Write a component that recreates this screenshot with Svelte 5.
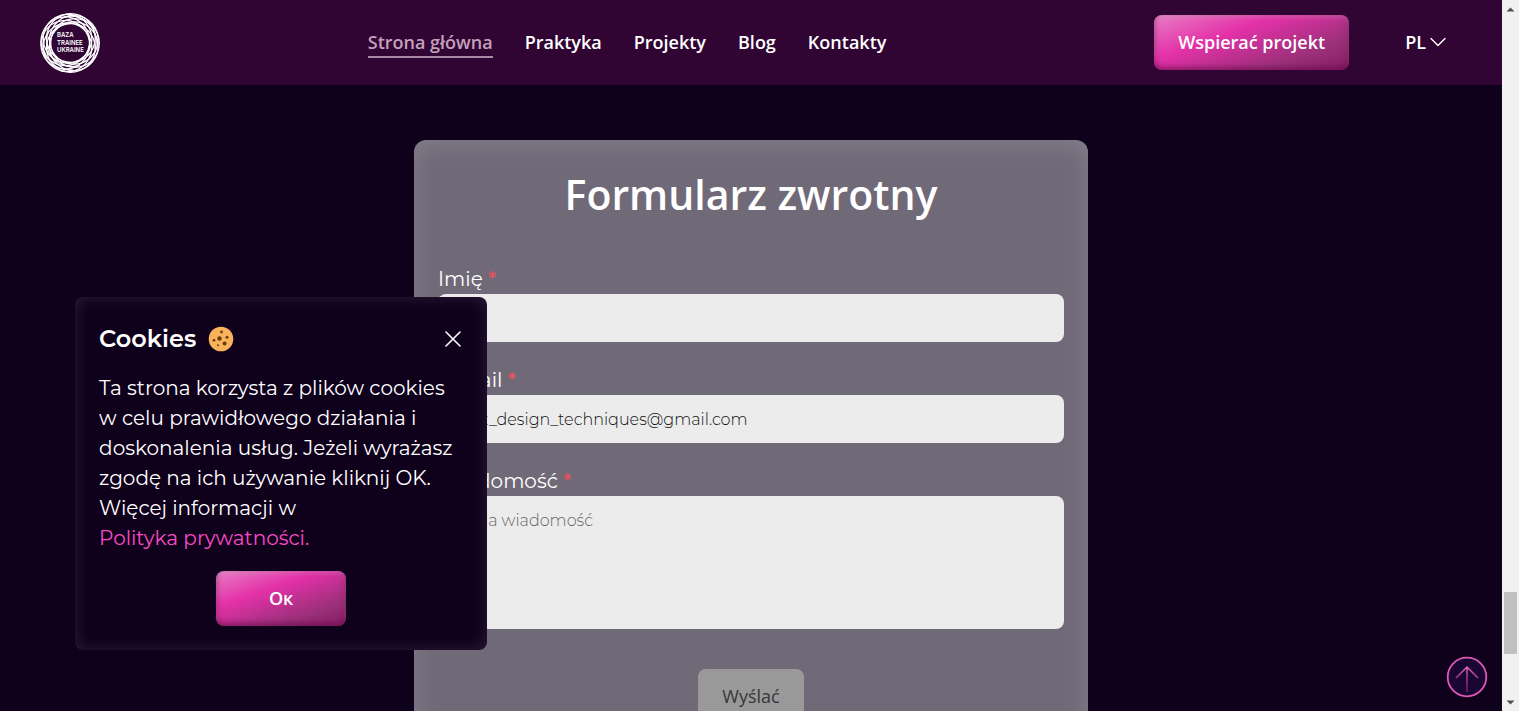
<script>
  const links = ['Strona główna', 'Praktyka', 'Projekty', 'Blog', 'Kontakty'];
  const rings = [0, 40, 80, 120, 160, 200, 240, 280, 320];
  let name = $state('');
  let email = $state('best_design_techniques@gmail.com');
  let message = $state('');
  let cookiesOpen = $state(true);
</script>

<div class="window">
  <div class="page">
    <header>
      <a class="logo" href="#home" aria-label="Baza Trainee Ukraine">
        <svg width="60" height="60" viewBox="0 0 60 60">
          <g fill="none" stroke="#fff" stroke-width="1.3">
            {#each rings as angle}
              <circle cx="35" cy="30" r="24.3" transform="rotate({angle} 30 30)" />
            {/each}
          </g>
          <path d="M8 20A25 25 0 0 0 40 52M3.5 25A27 27 0 0 0 33 57M22 5A25 25 0 0 1 55 36" fill="none" stroke="#fff" stroke-width="1.2" />
          <g fill="#fff" font-family="Inter, sans-serif" font-size="6" font-weight="600">
            <text x="17" y="24">BAZA</text>
            <text x="17" y="32">TRAINEE</text>
            <text x="17" y="39">UKRAINE</text>
          </g>
        </svg>
      </a>
      <nav>
        {#each links as link, i}
          <a href="#{link}" class:active={i === 0}>{link}</a>
        {/each}
      </nav>
      <div class="actions">
        <button class="pink support">Wspierać projekt</button>
        <button class="lang">
          PL
          <svg width="16" height="10" viewBox="0 0 16 10" fill="none" stroke="#fff" stroke-width="1.4" stroke-linecap="round"><path d="M1 1.5 8 8.5 15 1.5" /></svg>
        </button>
      </div>
    </header>

    <main>
      <form onsubmit={(e) => e.preventDefault()}>
        <h1>Formularz zwrotny</h1>
        <div class="field">
          <label for="name">Imię <span>*</span></label>
          <input id="name" type="text" bind:value={name} />
        </div>
        <div class="field">
          <label for="email">E-mail <span>*</span></label>
          <input id="email" type="email" bind:value={email} />
        </div>
        <div class="field">
          <label for="message">Wiadomość <span>*</span></label>
          <textarea id="message" placeholder="Twoja wiadomość" bind:value={message}></textarea>
        </div>
        <button class="send" disabled>Wyślać</button>
      </form>
    </main>

    {#if cookiesOpen}
      <section class="cookies" aria-labelledby="cookies-title">
        <div class="cookies-head">
          <h2 id="cookies-title">Cookies</h2>
          <svg width="26" height="26" viewBox="0 0 26 26">
            <circle cx="13" cy="13" r="12.3" fill="#f9b35c" />
            <g fill="#6d3c0c">
              <circle cx="11.5" cy="12.5" r="2.3" />
              <circle cx="13.5" cy="6" r="1.4" />
              <circle cx="19" cy="11.3" r="1.5" />
              <circle cx="16.6" cy="17.6" r="2" />
              <circle cx="6" cy="14.3" r="1.4" />
              <circle cx="10" cy="19.3" r="1" />
            </g>
          </svg>
          <button class="close" aria-label="Zamknij" onclick={() => (cookiesOpen = false)}>
            <svg width="16" height="16" viewBox="0 0 16 16" stroke="#fff" stroke-width="1.6" stroke-linecap="round"><path d="M1 1 15 15M15 1 1 15" /></svg>
          </button>
        </div>
        <p>
          Ta strona korzysta z plików cookies<br />w celu prawidłowego działania i<br />doskonalenia usług. Jeżeli wyrażasz<br />zgodę na ich używanie kliknij OK.<br />Więcej informacji w<br /><a href="#privacy">Polityka prywatności.</a>
        </p>
        <button class="pink ok" onclick={() => (cookiesOpen = false)}>Ок</button>
      </section>
    {/if}

    <a class="to-top" href="#top" aria-label="Do góry">
      <svg width="42" height="42" viewBox="0 0 42 42" fill="none">
        <defs>
          <linearGradient id="arrow" gradientUnits="userSpaceOnUse" x1="21" y1="10" x2="21" y2="36">
            <stop offset="0" stop-color="#e06bb8" />
            <stop offset="0.5" stop-color="#a8328c" />
            <stop offset="1" stop-color="#6a2164" />
          </linearGradient>
        </defs>
        <circle cx="21" cy="21" r="19.3" fill="#190632" stroke="#e056b4" stroke-width="1.8" />
        <path d="M21 36V11M10 22 21 11 32 22" stroke="url(#arrow)" stroke-width="1.5" />
      </svg>
    </a>
  </div>

  <div class="scrollbar" aria-hidden="true">
    <svg width="9" height="5" viewBox="0 0 9 5"><path d="M0.5 4.5 4.5 0.5 8.5 4.5Z" fill="#505050" /></svg>
    <div class="thumb"></div>
    <svg width="9" height="5" viewBox="0 0 9 5"><path d="M0.5 0.5 4.5 4.5 8.5 0.5Z" fill="#505050" /></svg>
  </div>
</div>

<style>
  :global(body) {
    background: #0f001c;
  }
  .window {
    display: flex;
    height: 100vh;
    overflow: hidden;
    color: #fff;
    font-family: Montserrat, Inter, sans-serif;
  }
  .window * {
    box-sizing: border-box;
  }
  .page {
    flex: 1;
    position: relative;
    overflow: hidden;
    background: #0f001c;
  }
  button {
    font-family: 'Open Sans', sans-serif;
    font-size: 18px;
    font-weight: 600;
    border: 0;
    color: #fff;
    cursor: pointer;
  }
  header {
    display: flex;
    align-items: center;
    justify-content: space-between;
    height: 85px;
    padding: 0 56px 0 40px;
    background: #300433;
  }
  .logo,
  .logo svg {
    display: block;
  }
  nav {
    display: flex;
    gap: 32px;
  }
  nav a {
    font: 600 18px/28px 'Open Sans', sans-serif;
    color: #fff;
    text-decoration: none;
    border-bottom: 2px solid transparent;
  }
  nav a.active {
    color: #c5a0bd;
    border-color: #a98ba5;
  }
  .actions {
    display: flex;
    align-items: center;
    gap: 56px;
  }
  .pink {
    height: 55px;
    padding: 0 24px 2px;
    border-radius: 8px;
    background: linear-gradient(160deg, #e87fc5 0%, #e431a8 36%, #993078 76%, #851c64 100%);
    box-shadow:
      inset 0 -2px 6px rgba(100, 0, 70, 0.7),
      inset 0 2px 4px rgba(255, 255, 255, 0.25);
  }
  .lang {
    display: flex;
    align-items: center;
    gap: 4px;
    padding: 0 0 2px;
    background: none;
  }
  main {
    display: flex;
    justify-content: center;
    padding: 55px 24px;
  }
  form {
    width: 100%;
    max-width: 674px;
    display: flex;
    flex-direction: column;
    padding: 24px 24px 40px;
    border-radius: 12px;
    background: #706a78;
    box-shadow: inset 0 4px 24px rgba(255, 255, 255, 0.14);
  }
  h1 {
    margin: 0 0 40px;
    text-align: center;
    font: 600 41px/60px 'Open Sans', sans-serif;
  }
  .field {
    display: flex;
    flex-direction: column;
    margin-bottom: 23px;
  }
  label {
    font-size: 20px;
    line-height: 30px;
  }
  label span {
    color: #ef5058;
    font-weight: 500;
  }
  input,
  textarea {
    height: 48px;
    padding: 0 16px;
    border: 0;
    border-radius: 8px;
    background: #ececec;
    color: #111;
    font: 300 16px/24px Montserrat, Inter, sans-serif;
  }
  textarea {
    height: 133px;
    padding: 13px 14px;
    resize: none;
  }
  textarea::placeholder {
    color: #666;
  }
  .send {
    align-self: center;
    height: 55px;
    margin-top: 17px;
    padding: 0 24px 2px;
    border-radius: 8px;
    background: #999;
    color: #373737;
    font-weight: 400;
  }
  .cookies {
    position: absolute;
    left: 5%;
    bottom: 61px;
    width: 412px;
    padding: 24px;
    display: flex;
    flex-direction: column;
    border-radius: 8px;
    background: #0f001c;
    box-shadow: inset 0 0 16px rgba(255, 255, 255, 0.12);
  }
  .cookies-head {
    display: flex;
    align-items: center;
    gap: 12px;
    height: 36px;
  }
  h2 {
    margin: 0;
    font-size: 24px;
    line-height: 36px;
    font-weight: 600;
  }
  .close {
    display: flex;
    margin-left: auto;
    padding: 2px;
    background: none;
  }
  p {
    margin: 16px 0 18px;
    font-size: 20px;
    line-height: 30px;
    white-space: nowrap;
  }
  p a {
    color: #f94bc4;
    text-decoration: none;
  }
  .ok {
    align-self: center;
    width: 130px;
  }
  .to-top {
    position: absolute;
    right: 14px;
    bottom: 13px;
  }
  .to-top svg {
    display: block;
  }
  .scrollbar {
    display: flex;
    flex-direction: column;
    align-items: center;
    width: 17px;
    padding: 7px 0 6px;
    background: #f1f1f1;
  }
  .thumb {
    width: 13px;
    height: 62px;
    margin: auto 0 46px;
    background: #c1c1c1;
  }
</style>
